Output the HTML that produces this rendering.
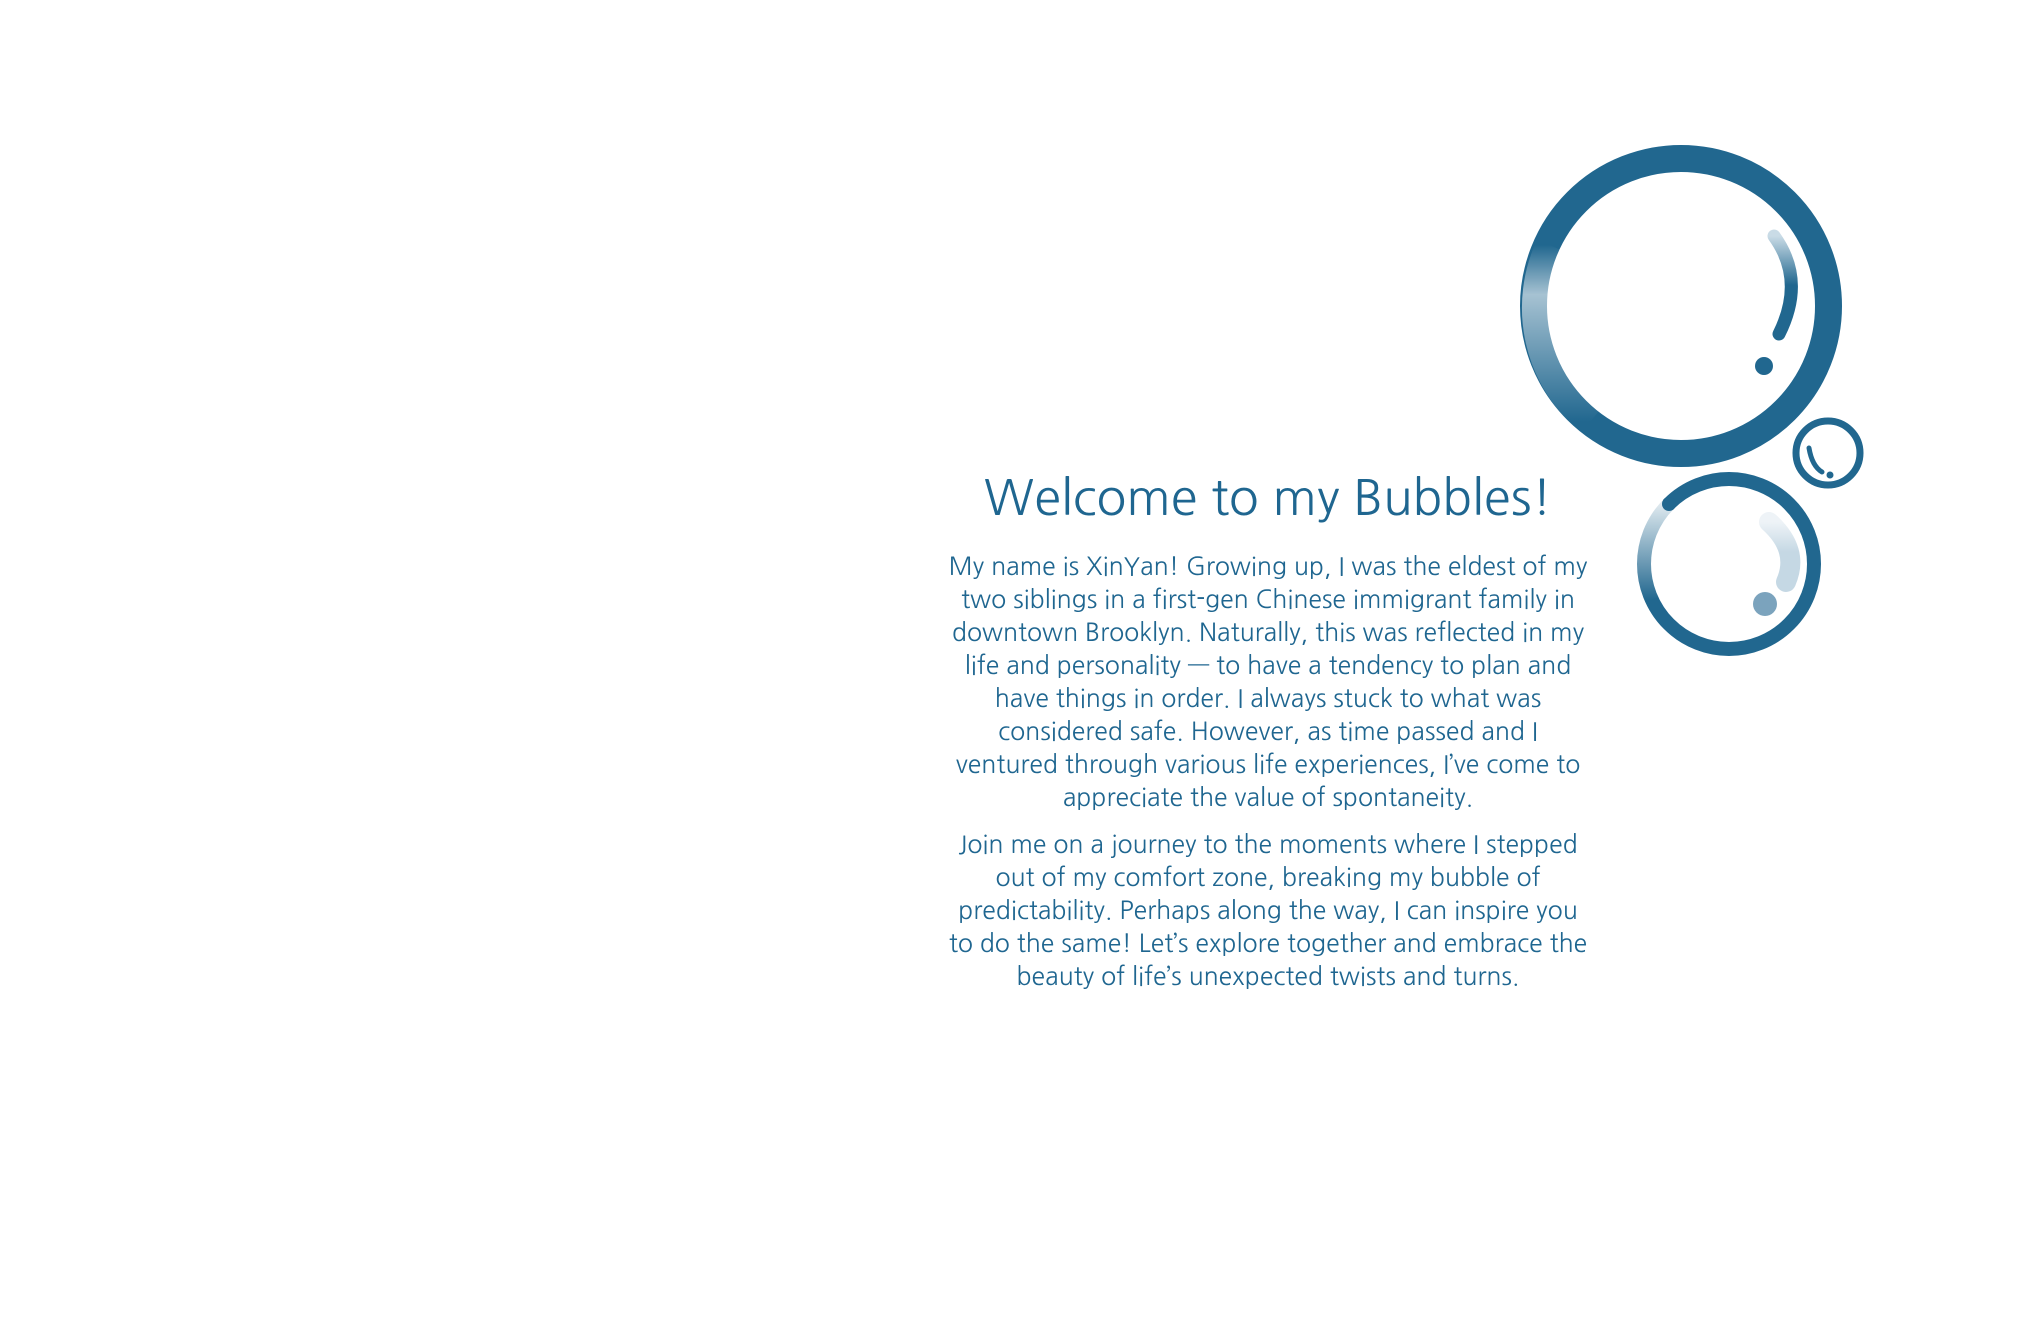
<!DOCTYPE html>
<html><head><meta charset="utf-8"><style>
html,body{margin:0;padding:0;background:#fff;}
body{width:2020px;height:1344px;position:relative;overflow:hidden;font-family:"NanumGothic","Liberation Sans",sans-serif;color:#1f6690;}
.t{position:absolute;left:868px;width:800px;text-align:center;white-space:nowrap;}
h1{font-weight:normal;font-size:49px;line-height:64px;margin:0;top:467px;}
p{margin:0;font-size:24.8px;line-height:33px;}
</style></head><body>
<h1 class="t">Welcome to my Bubbles!</h1>
<p class="t" style="top:550px">My name is XinYan! Growing up, I was the eldest of my<br>two siblings in a first-gen Chinese immigrant family in<br>downtown Brooklyn. Naturally, this was reflected in my<br>life and personality — to have a tendency to plan and<br>have things in order. I always stuck to what was<br>considered safe. However, as time passed and I<br>ventured through various life experiences, I’ve come to<br>appreciate the value of spontaneity.</p>
<p class="t" style="top:828px">Join me on a journey to the moments where I stepped<br>out of my comfort zone, breaking my bubble of<br>predictability. Perhaps along the way, I can inspire you<br>to do the same! Let’s explore together and embrace the<br>beauty of life’s unexpected twists and turns.</p>
<svg width="2020" height="1344" style="position:absolute;left:0;top:0" viewBox="0 0 2020 1344">
<defs>
<linearGradient id="gl" x1="0" y1="0" x2="0" y2="1">
<stop offset="0" stop-color="#fff" stop-opacity="0"/>
<stop offset="0.28" stop-color="#fff" stop-opacity="0.6"/>
<stop offset="1" stop-color="#fff" stop-opacity="0"/>
</linearGradient>
<linearGradient id="hl" x1="0" y1="0" x2="0" y2="1">
<stop offset="0" stop-color="#c9dbe6"/>
<stop offset="0.5" stop-color="#21678f"/>
<stop offset="1" stop-color="#21678f"/>
</linearGradient>
<linearGradient id="ml" x1="0" y1="0" x2="0" y2="1">
<stop offset="0" stop-color="#fff" stop-opacity="0.85"/>
<stop offset="1" stop-color="#fff" stop-opacity="0"/>
</linearGradient>
<linearGradient id="mh" x1="0" y1="0" x2="0" y2="1">
<stop offset="0" stop-color="#eef3f7"/>
<stop offset="0.5" stop-color="#c5d8e4"/>
<stop offset="1" stop-color="#c5d8e4"/>
</linearGradient>
</defs>
<circle cx="1681" cy="306" r="147.5" fill="none" stroke="#21678f" stroke-width="27"/>
<path d="M1550 245 A147.5 147.5 0 0 0 1590 422" fill="none" stroke="url(#gl)" stroke-width="28"/>
<path d="M1774 236 Q1806 280 1779 334" fill="none" stroke="url(#hl)" stroke-width="13" stroke-linecap="round"/>
<circle cx="1764" cy="366" r="9" fill="#21678f"/>
<circle cx="1828" cy="453" r="32" fill="none" stroke="#21678f" stroke-width="7"/>
<path d="M1809 448 Q1812 466 1822 472" fill="none" stroke="#21678f" stroke-width="5" stroke-linecap="round"/>
<circle cx="1830" cy="475" r="3.5" fill="#21678f"/>
<circle cx="1729" cy="564" r="85" fill="none" stroke="#21678f" stroke-width="14"/>
<path d="M1668 505 A85 85 0 0 0 1651 600" fill="none" stroke="url(#ml)" stroke-width="16"/>
<circle cx="1669" cy="504" r="7" fill="#21678f"/>
<path d="M1769 522 Q1800 550 1786 582" fill="none" stroke="url(#mh)" stroke-width="20" stroke-linecap="round"/>
<circle cx="1765" cy="604" r="12" fill="#7ba3bd"/>
</svg>
</body></html>
